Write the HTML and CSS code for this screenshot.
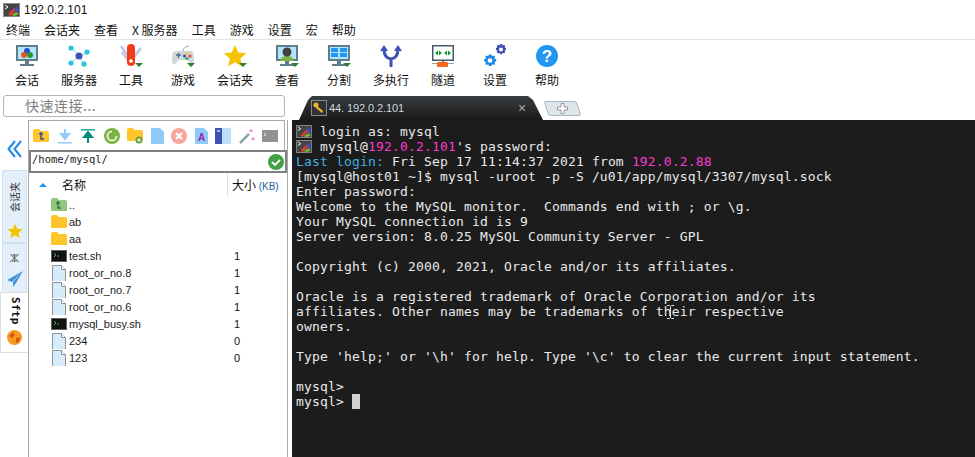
FILE: index.html
```html
<!DOCTYPE html>
<html lang="zh">
<head>
<meta charset="utf-8">
<title>192.0.2.101</title>
<link rel="stylesheet" href="styles.css">
</head>
<body>
<svg width="0" height="0" class="defs">
  <defs>
    <g id="logo">
      <rect x="0" y="0" width="17" height="14" fill="#8a8a8a"/>
      <rect x="1" y="1" width="15" height="12" fill="#444"/>
      <path d="M2 2l3 2-3 2" stroke="#fff" fill="none"/>
      <path d="M5 11l6-6 2 2-6 6z" fill="#e5392c"/>
      <path d="M11 5l3-2 2 5-3 2z" fill="#3f51b5"/>
      <path d="M8 12l5-3 3 2-4 2z" fill="#7cb82f"/>
    </g>
    <g id="monitor">
      <rect x="0" y="0" width="22" height="16" fill="#607d8b"/>
      <rect x="2" y="2" width="18" height="12" fill="#b3e5fc"/>
      <rect x="9" y="16" width="4" height="3" fill="#607d8b"/>
      <rect x="4" y="19" width="14" height="2" fill="#607d8b"/>
    </g>
    <path id="drop" d="M0 0h8l-4 4z" fill="#2e7d32"/>
    <g id="doc">
      <path d="M.5.5h9l4 4v13h-13z" fill="#d6ecfb" stroke="#8a949b"/>
      <path d="M9.5.5v4h4" fill="#fff" stroke="#8a949b"/>
    </g>
    <g id="shell">
      <rect width="16" height="12" fill="#616161"/>
      <rect x="1" y="1" width="14" height="10" fill="#111"/>
      <path d="M3 3l2 2-2 2M6 6h2" stroke="#4caf50" fill="none"/>
    </g>
    <path id="folder" d="M0 2q0-2 2-2h4l2 2h6q2 0 2 2v8q0 1-1 1H1q-1 0-1-1z" fill="#ffc52b"/>
  </defs>
</svg>

<header class="titlebar">
  <svg class="logo" width="17" height="14" viewBox="0 0 17 14"><use href="#logo"/></svg>
  <span>192.0.2.101</span>
</header>

<nav class="menubar">
  <span>终端</span><span>会话夹</span><span>查看</span><span>X 服务器</span><span>工具</span><span>游戏</span><span>设置</span><span>宏</span><span>帮助</span>
</nav>

<div class="toolbar">
  <div class="tool">
    <svg width="24" height="24" viewBox="0 0 24 24"><use href="#monitor" x="1" y="1"/><circle cx="12" cy="7" r="3" fill="#2b4bd8"/><circle cx="9" cy="11" r="3" fill="#e8541e"/><circle cx="15" cy="11" r="3" fill="#1e9e2f"/></svg>
    <span>会话</span>
  </div>
  <div class="tool">
    <svg width="24" height="24" viewBox="0 0 24 24"><path d="M5 4l7 8 8-3M12 12l-7 6M12 12l5 8" stroke="#80deea" fill="none"/><circle cx="12" cy="12" r="3.5" fill="#3f51b5"/><circle cx="4" cy="4" r="2.6" fill="#26c6da"/><circle cx="20" cy="8" r="2.6" fill="#26c6da"/><circle cx="4" cy="19" r="2.6" fill="#26c6da"/><circle cx="17" cy="20" r="2.6" fill="#26c6da"/></svg>
    <span>服务器</span>
  </div>
  <div class="tool">
    <svg width="24" height="24" viewBox="0 0 24 24"><path d="M2 2l9 13M22 4l-8 10M3 8l7 9" stroke="#c5cae9" stroke-width="3"/><rect x="8" y="0" width="8" height="22" rx="4" fill="#ef3d17"/><path d="M12 15v4M10 17h4" stroke="#fff" stroke-width="1.5"/><use href="#drop" x="16" y="19"/></svg>
    <span>工具</span>
  </div>
  <div class="tool">
    <svg width="24" height="24" viewBox="0 0 24 24"><path d="M4 7h16q3 0 3 9 0 5-3 4l-4-4H8l-4 4q-3 1-3-4 0-9 3-9z" fill="#cfd8dc"/><path d="M12 7q0-4 6-5" stroke="#90a4ae" fill="none"/><path d="M5 11h5M7.500 9v5" stroke="#546e7a" stroke-width="1.500"/><circle cx="16" cy="9.500" r="1.500" fill="#fbc02d"/><circle cx="19" cy="12" r="1.500" fill="#e53935"/><circle cx="13.500" cy="12" r="1.500" fill="#3949ab"/><circle cx="16" cy="14.500" r="1.500" fill="#43a047"/><use href="#drop" x="16" y="19"/></svg>
    <span>游戏</span>
  </div>
  <div class="tool">
    <svg width="24" height="24" viewBox="0 0 24 24"><path d="M12 1l3.300 7.500 8 .7-6 5.300 1.800 8-7.100-4.200L5 22.500l1.800-8-6-5.300 8-.7z" fill="#f4c400"/><use href="#drop" x="16" y="19"/></svg>
    <span>会话夹</span>
  </div>
  <div class="tool">
    <svg width="24" height="24" viewBox="0 0 24 24"><use href="#monitor" x="1" y="1"/><path d="M5 17q1-5 7-5t7 5z" fill="#7cb342"/><circle cx="12" cy="8" r="4.500" fill="#424242"/><use href="#drop" x="16" y="19"/></svg>
    <span>查看</span>
  </div>
  <div class="tool">
    <svg width="24" height="24" viewBox="0 0 24 24"><use href="#monitor" x="1" y="1"/><path d="M4 4h7v4H4zM13 4h7v4h-7zM4 9h7v4H4zM13 9h7v4h-7z" fill="#2196f3"/><use href="#drop" x="16" y="19"/></svg>
    <span>分割</span>
  </div>
  <div class="tool">
    <svg width="24" height="24" viewBox="0 0 24 24"><path d="M12 23v-8M12 15Q5 14 5 5M12 15q7-1 7-10" stroke="#3f51b5" stroke-width="3" fill="none"/><path d="M1 7l4-6 4 6zM15 7l4-6 4 6z" fill="#3f51b5"/></svg>
    <span>多执行</span>
  </div>
  <div class="tool">
    <svg width="24" height="24" viewBox="0 0 24 24"><rect x="1" y="1" width="22" height="16" fill="#455a64"/><rect x="2.500" y="2.500" width="19" height="13" fill="#fff"/><path d="M4 9l3-2.500v5zM11 9l-3-2.500v5zM13 9l3-2.500v5zM20 9l-3-2.500v5z" fill="#0a9b2a"/><rect x="11" y="17" width="2" height="2" fill="#777"/><rect x="1" y="19" width="22" height="1" fill="#90a4ae"/><rect x="6" y="18" width="11" height="5" rx="1" fill="#f4661d"/></svg>
    <span>隧道</span>
  </div>
  <div class="tool">
    <svg width="24" height="24" viewBox="0 0 24 24"><path d="M7 10.500l1.500 0 .6 1.800 1.900-.8 1.200 1.200-.8 1.800 1.800.8v2l-1.800.7.800 1.800-1.200 1.200-1.900-.8-.6 1.800h-2.600l-.7-1.800-1.800.8-1.200-1.200.8-1.800-1.900-.7v-2l1.900-.8-.8-1.800 1.200-1.200 1.800.8.700-1.800z" fill="#1e88e5"/><circle cx="7" cy="16.500" r="2.300" fill="#fff"/><path d="M17 0h2l.5 1.500 1.500-.7 1.300 1.300-.7 1.500 1.400.5v2l-1.400.5.700 1.500-1.300 1.300-1.500-.7-.5 1.500h-2l-.5-1.500-1.500.7-1.300-1.300.7-1.500-1.400-.5v-2l1.400-.5-.7-1.500 1.300-1.300 1.500.7z" fill="#3f51b5"/><circle cx="18" cy="5.500" r="2" fill="#fff"/></svg>
    <span>设置</span>
  </div>
  <div class="tool">
    <svg width="24" height="24" viewBox="0 0 24 24"><circle cx="12" cy="12" r="11" fill="#2196f3"/><text x="12" y="18" class="help-mark">?</text></svg>
    <span>帮助</span>
  </div>
</div>

<div class="tabrow">
  <div class="quick">快速连接...</div>
  <div class="tabs">
    <div class="tab">
      <svg class="key" width="16" height="16" viewBox="0 0 16 16"><rect x=".5" y=".5" width="15" height="15" fill="#333" stroke="#888"/><circle cx="5" cy="5" r="2.500" fill="#f2b92c"/><path d="M6 6l6 5-1 2-6-5z" fill="#f2b92c"/></svg>
      <span class="tab-title">44. 192.0.2.101</span>
      <span class="tab-close">×</span>
    </div>
    <div class="newtab">
      <svg width="11" height="11" viewBox="0 0 11 11"><path d="M4 .5h3v3.500h3.500v3H7v3.500H4V7H.5V4H4z" fill="#fff" stroke="#999"/></svg>
    </div>
  </div>
</div>

<main class="main">
  <aside class="side">
    <div class="chev">
      <svg width="15" height="18" viewBox="0 0 15 18"><path d="M8 1L1.500 9 8 17M14 1L7.500 9 14 17" stroke="#1e88e5" stroke-width="2" fill="none"/></svg>
    </div>
    <div class="vtab vtab-a">
      <span class="vtext vtext-up">会话夹</span>
      <svg width="16" height="16" viewBox="0 0 24 24"><path d="M12 1l3.300 7.500 8 .7-6 5.300 1.800 8-7.100-4.200L5 22.500l1.800-8-6-5.300 8-.7z" fill="#f4c400"/></svg>
    </div>
    <div class="vtab vtab-b">
      <svg width="11" height="10" viewBox="0 0 11 10"><path d="M1 1l9 8M10 1L1 9M5.500 1v8M3 2h5M3 8h5" stroke="#666"/></svg>
      <svg width="16" height="16" viewBox="0 0 16 16"><path d="M16 0L0 9l5 2zM16 0L6 11v5l3-4z" fill="#4a90d9"/></svg>
    </div>
    <div class="vtab vtab-c">
      <span class="vtext vtext-bold">Sftp</span>
      <svg width="15" height="15" viewBox="0 0 15 15"><circle cx="7.500" cy="7.500" r="7.500" fill="#f79b1e"/><path d="M2 6l4-4 2 3-3 3zM9 8l4-1-1 5-3 1z" fill="#d9541e"/></svg>
    </div>
  </aside>

  <section class="sftp">
    <div class="sftp-tools">
      <svg width="16" height="14" viewBox="0 0 16 14"><use href="#folder"/><path d="M8 3v7h3M6 5h4" stroke="#3949ab" stroke-width="1.500" fill="none"/></svg>
      <svg width="16" height="16" viewBox="0 0 16 16"><path d="M8 1v9M4 6l4 5 4-5z" stroke="#90caf9" stroke-width="2" fill="#90caf9"/><rect x="1" y="14" width="14" height="1.500" fill="#90caf9"/></svg>
      <svg width="16" height="16" viewBox="0 0 16 16"><rect x="1" y="1" width="14" height="1.500" fill="#26a69a"/><path d="M8 15V7M4 9l4-5 4 5z" stroke="#00897b" stroke-width="2" fill="#00897b"/></svg>
      <svg width="16" height="16" viewBox="0 0 16 16"><circle cx="8" cy="8" r="8" fill="#7cb342"/><path d="M8 3.500a4.500 4.500 0 1 0 4.500 4.500" stroke="#fff" stroke-width="1.500" fill="none"/></svg>
      <svg width="16" height="16" viewBox="0 0 16 16"><use href="#folder"/><circle cx="12" cy="12" r="3.500" fill="#689f38"/><path d="M10 12h4M12 10v4" stroke="#fff"/></svg>
      <svg width="13" height="16" viewBox="0 0 13 16"><path d="M0 0h9l4 4v12H0z" fill="#90caf9"/></svg>
      <svg width="16" height="16" viewBox="0 0 16 16"><circle cx="8" cy="8" r="8" fill="#f8a5a0"/><path d="M5 5l6 6M11 5l-6 6" stroke="#fff" stroke-width="2"/></svg>
      <svg class="doc-icon" width="13" height="16" viewBox="0 0 13 16"><path d="M0 0h9l4 4v12H0z" fill="#90caf9"/><text x="6.500" y="13" class="doc-a">A</text></svg>
      <svg width="16" height="16" viewBox="0 0 16 16"><rect width="16" height="16" fill="#bbdefb"/><rect width="7" height="16" fill="#3f51b5"/><rect x="2" y="2" width="3" height="2" fill="#90caf9"/></svg>
      <svg width="16" height="16" viewBox="0 0 16 16"><path d="M1 15L10 6" stroke="#90a4ae" stroke-width="2.500"/><path d="M12 1v3M10 3h4M14 9v3M12 11h4" stroke="#ec70c8"/></svg>
      <svg width="16" height="12" viewBox="0 0 16 12"><rect width="16" height="12" fill="#8f9396"/><path d="M2 3l2 1.500L2 6" stroke="#eee" fill="none"/></svg>
    </div>
    <div class="path">
      <span>/home/mysql/</span>
      <svg width="16" height="16" viewBox="0 0 16 16"><circle cx="8" cy="8" r="8" fill="#43a047"/><path d="M4 8l3 3 5-5" stroke="#fff" stroke-width="1.800" fill="none"/></svg>
    </div>
    <div class="thead">
      <span class="sort"></span>
      <span class="th-name">名称</span>
      <span class="th-size">大小 <span class="unit">(KB)</span></span>
    </div>
    <ul class="files">
      <li><svg width="16" height="13" viewBox="0 0 16 13"><path d="M0 2q0-2 2-2h4l2 2h6q2 0 2 2v8q0 1-1 1H1q-1 0-1-1z" fill="#93c47d"/><path d="M7 3v7h3M5 5h4" stroke="#2e7d32" stroke-width="1.500" fill="none"/></svg><span class="fname">..</span><span class="fsize"></span></li>
      <li><svg width="16" height="13" viewBox="0 0 16 13"><use href="#folder"/></svg><span class="fname">ab</span><span class="fsize"></span></li>
      <li><svg width="16" height="13" viewBox="0 0 16 13"><use href="#folder"/></svg><span class="fname">aa</span><span class="fsize"></span></li>
      <li><svg width="16" height="12" viewBox="0 0 16 12"><use href="#shell"/></svg><span class="fname">test.sh</span><span class="fsize">1</span></li>
      <li><svg width="16" height="16" viewBox="0 0 14 16"><use href="#doc"/></svg><span class="fname">root_or_no.8</span><span class="fsize">1</span></li>
      <li><svg width="16" height="16" viewBox="0 0 14 16"><use href="#doc"/></svg><span class="fname">root_or_no.7</span><span class="fsize">1</span></li>
      <li><svg width="16" height="16" viewBox="0 0 14 16"><use href="#doc"/></svg><span class="fname">root_or_no.6</span><span class="fsize">1</span></li>
      <li><svg width="16" height="12" viewBox="0 0 16 12"><use href="#shell"/></svg><span class="fname">mysql_busy.sh</span><span class="fsize">1</span></li>
      <li><svg width="16" height="16" viewBox="0 0 14 16"><use href="#doc"/></svg><span class="fname">234</span><span class="fsize">0</span></li>
      <li><svg width="16" height="16" viewBox="0 0 14 16"><use href="#doc"/></svg><span class="fname">123</span><span class="fsize">0</span></li>
    </ul>
  </section>

  <section class="term">
<pre class="line-ico"><svg width="16" height="13" viewBox="0 0 17 14"><use href="#logo"/></svg> login as: mysql</pre>
<pre class="line-ico"><svg width="16" height="13" viewBox="0 0 17 14"><use href="#logo"/></svg> mysql@<span class="pink">192.0.2.101</span>'s password:</pre>
<pre><span class="cyan">Last login:</span> Fri Sep 17 11:14:37 2021 from <span class="pink">192.0.2.88</span>
[mysql@host01 ~]$ mysql -uroot -p -S /u01/app/mysql/3307/mysql.sock
Enter password:
Welcome to the MySQL monitor.  Commands end with ; or \g.
Your MySQL connection id is 9
Server version: 8.0.25 MySQL Community Server - GPL

Copyright (c) 2000, 2021, Oracle and/or its affiliates.

Oracle is a registered trademark of Oracle Corporation and/or its
affiliates. Other names may be trademarks of their respective
owners.

Type 'help;' or '\h' for help. Type '\c' to clear the current input statement.

mysql&gt;
mysql&gt; <span class="cursor"> </span></pre>
    <svg class="ibeam" width="7" height="14" viewBox="0 0 7 14"><path d="M0 .5h2.500l1 1 1-1H7M3.500 1.500v11M0 13.500h2.500l1-1 1 1H7" stroke="#e8e8e8" fill="none"/></svg>
  </section>
</main>
</body>
</html>
```
FILE: styles.css
```css
* { box-sizing: border-box; }
html, body { margin: 0; padding: 0; }
body {
  width: 975px;
  height: 457px;
  overflow: hidden;
  background: #fff;
  color: #111;
  font-family: "Liberation Sans", "Noto Sans CJK SC", sans-serif;
  font-size: 12px;
  display: flex;
  flex-direction: column;
}
.defs { position: absolute; }

.titlebar {
  height: 20px;
  display: flex;
  align-items: center;
  gap: 4px;
  padding-left: 3px;
  font-size: 12px;
}
.menubar {
  height: 20px;
  display: flex;
  align-items: center;
  gap: 14px;
  padding-left: 6px;
  font-size: 12px;
  font-family: "Noto Sans CJK SC", sans-serif;
  border-bottom: 1px solid #e4e4e4;
}
.toolbar {
  height: 54px;
  display: flex;
  padding: 4px 0 0 1px;
}
.tool {
  width: 52px;
  display: flex;
  flex-direction: column;
  align-items: center;
  gap: 3px;
  font-family: "Noto Sans CJK SC", sans-serif;
  font-size: 12px;
  line-height: 18px;
}
.help-mark { font: bold 17px "Liberation Sans", sans-serif; fill: #fff; text-anchor: middle; }
.doc-a { font: bold 10px "Liberation Sans", sans-serif; fill: #8e24aa; text-anchor: middle; }
.doc-icon { overflow: visible; }

.tabrow {
  height: 26px;
  display: flex;
  align-items: flex-start;
  padding-left: 3px;
}
.quick {
  width: 282px;
  height: 22px;
  margin-top: 1px;
  border: 1px solid #b4b4b4;
  border-radius: 3px;
  padding-left: 21px;
  color: #808080;
  font-family: "Noto Sans CJK SC", sans-serif;
  font-size: 14px;
  line-height: 18px;
  letter-spacing: .5px;
}
.tabs {
  margin-left: 14px;
  display: flex;
  align-items: flex-end;
  height: 26px;
  gap: 3px;
}
.tab {
  width: 244px;
  height: 24px;
  display: flex;
  align-items: center;
  padding-left: 12px;
  color: #cfd8dc;
  font-size: 11px;
  background: linear-gradient(#3a3d40, #18191a);
  clip-path: polygon(0 100%, 9px 4px, 13px 0, 229px 0, 234px 4px, 244px 100%);
}
.key { margin-right: 2px; }
.tab-title { flex: 1; letter-spacing: -.1px; }
.tab-close { width: 25px; font-size: 14px; color: #aaa; }
.newtab {
  width: 33px;
  height: 15px;
  margin-bottom: 4px;
  display: flex;
  align-items: center;
  justify-content: center;
  background: #dfe6ea;
  border: 1px solid #a9b6bd;
  border-radius: 3px;
  transform: skewX(18deg);
}
.newtab svg { transform: skewX(-18deg); }

.main { flex: 1; display: flex; min-height: 0; }
.side {
  width: 28px;
  display: flex;
  flex-direction: column;
  align-items: flex-end;
}
.chev {
  height: 50px;
  width: 28px;
  padding: 20px 0 0 7px;
}
.chev svg { display: block; }
.vtab {
  display: flex;
  flex-direction: column;
  align-items: center;
  gap: 4px;
  width: 25px;
  background: #e3f0fb;
  border: 1px solid #cfe2f2;
  margin-right: 1px;
}
.vtab-a { height: 73px; padding-top: 11px; gap: 11px; }
.vtab-b { height: 50px; padding-top: 9px; gap: 8px; }
.vtab-c {
  width: 28px;
  height: 61px;
  margin-right: 0;
  margin-top: -1px;
  background: #fff;
  border: 1px solid #ddd;
  border-right: 0;
  padding-top: 4px;
  gap: 5px;
  position: relative;
}
.vtext {
  writing-mode: vertical-rl;
  font-family: "Noto Sans CJK SC", sans-serif;
  font-size: 10px;
  line-height: 14px;
  color: #333;
}
.vtext-up { writing-mode: sideways-lr; }
.vtext-bold {
  font-family: "DejaVu Sans Mono", monospace;
  font-size: 11px;
  font-weight: bold;
  letter-spacing: .3px;
  color: #111;
}

.sftp {
  width: 260px;
  border: 1px solid #a8a8a8;
  border-top: 0;
  border-bottom: 0;
  display: flex;
  flex-direction: column;
}
.sftp-tools {
  height: 30px;
  display: flex;
  align-items: center;
  gap: 7.5px;
  padding-left: 4px;
  border-top: 1px solid #a8a8a8;
  border-right: 1px solid #a8a8a8;
  margin-right: 2px;
}
.path {
  height: 23px;
  border: 2px solid #808080;
  display: flex;
  align-items: center;
  justify-content: space-between;
  padding: 0 1px 0 1px;
  font: 10.5px "DejaVu Sans Mono", monospace;
}
.path span { align-self: flex-start; margin-top: 1px; color: #222; }
.thead {
  height: 23px;
  display: flex;
  align-items: center;
  font-family: "Noto Sans CJK SC", sans-serif;
  font-size: 12px;
}
.sort {
  width: 0;
  height: 0;
  margin-left: 10px;
  border: 4px solid transparent;
  border-top: 0;
  border-bottom: 4px solid #2196f3;
}
.th-name { margin-left: 15px; width: 165px; }
.th-size {
  border-left: 1px solid #ddd;
  padding-left: 4px;
  height: 23px;
  line-height: 23px;
  font-size: 12px;
  white-space: nowrap;
}
.unit { font-family: "Liberation Sans", sans-serif; font-size: 10px; color: #2a5d9c; }
.files { list-style: none; margin: 0; padding: 0; }
.files li {
  height: 17px;
  display: flex;
  align-items: center;
  padding-left: 22px;
  font-size: 11px;
}
.files li svg { width: 16px; flex: none; }
.fname { width: 165px; margin-left: 2px; color: #222; }
.fsize { width: 20px; }

.term {
  flex: 1;
  margin-left: 4px;
  background: #1c1c1c;
  color: #eaeaea;
  padding: 4px 0 0 4px;
  overflow: hidden;
  position: relative;
}
.term pre {
  margin: 0;
  font-family: "DejaVu Sans Mono", monospace;
  font-size: 13px;
  line-height: 15px;
  letter-spacing: .17px;
}
.line-ico svg { vertical-align: -2px; }
.pink { color: #fb3ad0; }
.cyan { color: #42aee0; }
.cursor { background: #d0d0d0; display: inline-block; width: 8px; height: 15px; }
.ibeam { position: absolute; left: 375px; top: 185px; }
```
